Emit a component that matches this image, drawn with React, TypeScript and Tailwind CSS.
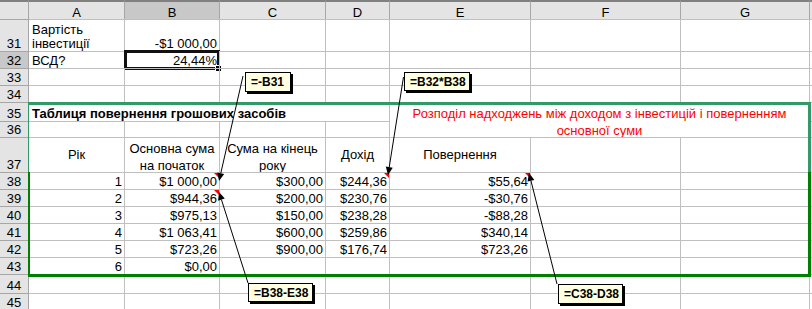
import React from 'react';

type CellProps = {
    children?: React.ReactNode;
    first?: boolean;
    tri?: boolean;
    mid?: boolean;
    className?: string;
};

// plain worksheet cell: gridline on top and left, text sits at the bottom unless mid
function Cell({ children, first, tri, mid, className = '' }: CellProps) {
    return (
        <div
            className={`relative flex border-t border-[#c0c0c0] px-[2px] leading-[14px] whitespace-nowrap ${mid ? 'items-center' : 'items-end'} ${first ? '' : 'border-l'} ${className}`}
        >
            {children}
            {tri && (
                <span className="absolute top-0 right-0 h-[5px] w-[5px] bg-[#ff0000] [clip-path:polygon(0_0,100%_0,100%_100%)]" />
            )}
        </div>
    );
}

function RowHead({ n, sel }: { n?: number; sel?: boolean }) {
    return (
        <div
            className={`flex items-end justify-center border-t border-r border-[#a6a6a6] leading-[14px] ${sel ? 'bg-[#c8c8c8]' : 'bg-[#e4e4e4]'}`}
        >
            {n}
        </div>
    );
}

function ColHead({ label, sel, first }: { label?: string; sel?: boolean; first?: boolean }) {
    return (
        <div
            className={`flex items-end justify-center border-t-2 border-t-[#808080] leading-[13px] ${first ? '' : 'border-l border-l-[#a6a6a6]'} ${sel ? 'bg-[#c8c8c8]' : 'bg-[#e4e4e4]'}`}
        >
            {label}
        </div>
    );
}

const dataRows = [
    { n: 38, a: '1', b: '$1 000,00', c: '$300,00', d: '$244,36', e: '$55,64', tb: true, td: true, te: true },
    { n: 39, a: '2', b: '$944,36', c: '$200,00', d: '$230,76', e: '-$30,76', tb: true },
    { n: 40, a: '3', b: '$975,13', c: '$150,00', d: '$238,28', e: '-$88,28' },
    { n: 41, a: '4', b: '$1 063,41', c: '$600,00', d: '$259,86', e: '$340,14' },
    { n: 42, a: '5', b: '$723,26', c: '$900,00', d: '$176,74', e: '$723,26' },
    { n: 43, a: '6', b: '$0,00', c: '', d: '', e: '' },
];

const arrows = [
    [243, 76, 219, 181],
    [403.5, 77, 388, 175],
    [248, 283, 219, 192],
    [557, 284, 529, 173],
];

const notes = [
    { text: '=-B31', cls: 'left-[245px] top-[72px] w-[46px] h-[20px]' },
    { text: '=B32*B38', cls: 'left-[404px] top-[72px] w-[66px] h-[19px]' },
    { text: '=B38-E38', cls: 'left-[248px] top-[283px] w-[65px] h-[19px]' },
    { text: '=C38-D38', cls: 'left-[558px] top-[284px] w-[65px] h-[20px]' },
];

function Arrow({ x1, y1, x2, y2 }: { x1: number; y1: number; x2: number; y2: number }) {
    const len = Math.hypot(x2 - x1, y2 - y1);
    const ux = (x2 - x1) / len;
    const uy = (y2 - y1) / len;
    const bx = x2 - ux * 8;
    const by = y2 - uy * 8;
    const pts = `${x2},${y2} ${bx - uy * 3.5},${by + ux * 3.5} ${bx + uy * 3.5},${by - ux * 3.5}`;
    return (
        <g>
            <line x1={x1} y1={y1} x2={bx} y2={by} stroke="#000" strokeWidth={1} />
            <polygon points={pts} fill="#000" />
        </g>
    );
}

function EmptyRow({ n }: { n: number }) {
    return (
        <>
            <RowHead n={n} />
            <Cell first />
            <Cell />
            <Cell />
            <Cell />
            <Cell />
            <Cell />
            <Cell />
            <Cell />
        </>
    );
}

export default function App() {
    return (
        <div className="relative h-[309px] w-[812px] overflow-hidden bg-white font-['Liberation_Sans',Arial,sans-serif] text-[13px] text-black">
            <div className="grid grid-cols-[29px_95px_95px_106px_64px_141px_150px_129px_1fr] grid-rows-[19px_32px_17px_17px_17px_19px_16px_35px_17px_17px_17px_17px_17px_17px_19px_17px]">
                {/* column headers */}
                <div className="border-t-2 border-r border-t-[#808080] border-r-[#a6a6a6] bg-[#e4e4e4]" />
                <ColHead label="A" first />
                <ColHead label="B" sel />
                <ColHead label="C" />
                <ColHead label="D" />
                <ColHead label="E" />
                <ColHead label="F" />
                <ColHead label="G" />
                <ColHead />

                {/* 31 */}
                <RowHead n={31} />
                <Cell first className="pl-[3px] leading-4">
                    <div>
                        Вартість
                        <br />
                        інвестиції
                    </div>
                </Cell>
                <Cell className="justify-end">-$1 000,00</Cell>
                <Cell />
                <Cell />
                <Cell />
                <Cell />
                <Cell />
                <Cell />

                {/* 32 */}
                <RowHead n={32} sel />
                <Cell first className="pl-[3px]">ВСД?</Cell>
                <Cell className="justify-end">
                    24,44%
                    <div className="absolute -top-[2px] -right-[1px] -bottom-[2px] -left-[1px] border-[3px] border-[#111]">
                        <div className="absolute -right-[5px] -bottom-[5px] h-[7px] w-[7px] border border-white bg-black" />
                    </div>
                </Cell>
                <Cell />
                <Cell />
                <Cell />
                <Cell />
                <Cell />
                <Cell />

                <EmptyRow n={33} />
                <EmptyRow n={34} />

                {/* 35 */}
                <RowHead n={35} />
                <Cell first className="col-span-4 pl-[3px] font-bold">
                    Таблиця повернення грошових засобів
                </Cell>
                <div className="col-span-3 row-span-2 flex items-center justify-center border-t border-l border-[#c0c0c0] pt-[4px] text-[#ff0000]">
                    <div className="text-center leading-[17px] whitespace-nowrap">
                        Розподіл надходжень між доходом з інвестицій і поверненням
                        <br />
                        основної суми
                    </div>
                </div>
                <Cell />

                {/* 36 */}
                <RowHead n={36} />
                <Cell first />
                <Cell />
                <Cell />
                <Cell />
                <Cell />

                {/* 37 */}
                <RowHead n={37} />
                <Cell first mid className="justify-center">Рік</Cell>
                <Cell mid className="justify-center pt-[4px]">
                    <div className="text-center leading-[17px]">
                        Основна сума
                        <br />
                        на початок
                    </div>
                </Cell>
                <Cell mid className="justify-center pt-[4px]">
                    <div className="text-center leading-[17px]">
                        Сума на кінець
                        <br />
                        року
                    </div>
                </Cell>
                <Cell mid className="justify-center">Дохід</Cell>
                <Cell mid className="justify-center">Повернення</Cell>
                <Cell />
                <Cell />
                <Cell />

                {dataRows.map((r) => (
                    <React.Fragment key={r.n}>
                        <RowHead n={r.n} />
                        <Cell first className="justify-end">{r.a}</Cell>
                        <Cell className="justify-end" tri={r.tb}>{r.b}</Cell>
                        <Cell className="justify-end">{r.c}</Cell>
                        <Cell className="justify-end" tri={r.td}>{r.d}</Cell>
                        <Cell className="justify-end" tri={r.te}>{r.e}</Cell>
                        <Cell />
                        <Cell />
                        <Cell />
                    </React.Fragment>
                ))}

                <EmptyRow n={44} />
                <EmptyRow n={45} />
            </div>

            {/* range borders of the table */}
            <div className="pointer-events-none absolute top-[102px] left-[28px] h-[70px] w-[783px] border-t-[3px] border-r-[3px] border-l border-[#339966]" />
            <div className="pointer-events-none absolute top-[172px] left-[28px] h-[105px] w-[783px] border-r-[3px] border-b-[3px] border-l-2 border-[#008000]" />

            {/* comment arrows */}
            <svg className="pointer-events-none absolute top-0 left-0" width={812} height={309}>
                {arrows.map(([x1, y1, x2, y2], i) => (
                    <Arrow key={i} x1={x1} y1={y1} x2={x2} y2={y2} />
                ))}
            </svg>

            {notes.map((n) => (
                <div
                    key={n.text}
                    className={`absolute flex items-center border border-black bg-[#ffffe1] pl-[5px] text-[12px] font-bold whitespace-nowrap shadow-[2px_2px_0_#000] ${n.cls}`}
                >
                    {n.text}
                </div>
            ))}
        </div>
    );
}
